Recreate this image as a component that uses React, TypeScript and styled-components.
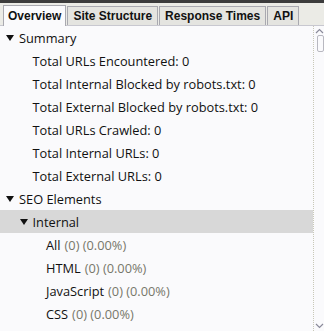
import styled, { createGlobalStyle } from "styled-components";

const GlobalStyle = createGlobalStyle`
  html, body { margin: 0; padding: 0; }
  body {
    width: 324px;
    height: 331px;
    overflow: hidden;
    background: #fafafc;
    font-family: "Open Sans", "Liberation Sans", sans-serif;
  }
`;

type Row = { label: string; level: number; toggle?: boolean; selected?: boolean; stats?: string };

const rows: Row[] = [
  { label: "Summary", level: 0, toggle: true },
  { label: "Total URLs Encountered: 0", level: 1 },
  { label: "Total Internal Blocked by robots.txt: 0", level: 1 },
  { label: "Total External Blocked by robots.txt: 0", level: 1 },
  { label: "Total URLs Crawled: 0", level: 1 },
  { label: "Total Internal URLs: 0", level: 1 },
  { label: "Total External URLs: 0", level: 1 },
  { label: "SEO Elements", level: 0, toggle: true },
  { label: "Internal", level: 1, toggle: true, selected: true },
  { label: "All", level: 2, stats: "(0) (0.00%)" },
  { label: "HTML", level: 2, stats: "(0) (0.00%)" },
  { label: "JavaScript", level: 2, stats: "(0) (0.00%)" },
  { label: "CSS", level: 2, stats: "(0) (0.00%)" },
];

const tabs = ["Overview", "Site Structure", "Response Times", "API"];

const App = () => (
  <Frame>
    <GlobalStyle />
    <TopStrip />
    <TabBar>
      {tabs.map((t, i) => (
        <Tab key={t} $active={i === 0}>
          {t}
        </Tab>
      ))}
    </TabBar>
    <Body>
      <Tree>
        {rows.map((r) => (
          <TreeRow key={r.label} $selected={!!r.selected}>
            <Indent $level={r.level}>
              <ArrowBox>
                {r.toggle && (
                  <svg width="8" height="6" viewBox="0 0 8 6">
                    <path d="M0 0 H8 L4 6 Z" fill="#111" />
                  </svg>
                )}
              </ArrowBox>
              <Label>{r.label}</Label>
              {r.stats && <Stats>{r.stats}</Stats>}
            </Indent>
          </TreeRow>
        ))}
      </Tree>
      <ScrollBar>
        <Chevron viewBox="0 0 9 6">
          <path d="M1 5 L4.5 1.5 L8 5" fill="none" stroke="#8a8a9a" strokeWidth="1.2" />
        </Chevron>
        <Thumb />
        <Track />
        <Chevron viewBox="0 0 9 6">
          <path d="M1 1 L4.5 4.5 L8 1" fill="none" stroke="#8a8a9a" strokeWidth="1.2" />
        </Chevron>
      </ScrollBar>
    </Body>
  </Frame>
);

export default App;

const Frame = styled.div`
  width: 324px;
  height: 331px;
  display: flex;
  flex-direction: column;
  overflow: hidden;
`;

const TopStrip = styled.div`
  height: 3px;
  background: #3c3c3c;
`;

const TabBar = styled.div`
  height: 23px;
  display: flex;
  align-items: flex-end;
  gap: 1px;
  padding-left: 3px;
  background: #ebebe6;
  border-bottom: 1px solid #c8c8d0;
  box-sizing: border-box;
`;

const Tab = styled.div<{ $active: boolean }>`
  height: ${(p) => (p.$active ? "21px" : "19px")};
  padding: 0 ${(p) => (p.$active ? "4px" : "5px")};
  display: flex;
  align-items: center;
  white-space: nowrap;
  box-sizing: border-box;
  border: 1px solid #a9a9b0;
  border-bottom: none;
  background: ${(p) => (p.$active ? "#fafafc" : "#e4e4e0")};
  font-family: "Liberation Sans", Arial, sans-serif;
  font-weight: bold;
  font-size: 12px;
  color: #111;
  margin-bottom: ${(p) => (p.$active ? "-1px" : "0")};
`;

const Body = styled.div`
  flex: 1;
  display: flex;
  min-height: 0;
`;

const Tree = styled.div`
  flex: 1;
  display: flex;
  flex-direction: column;
`;

const TreeRow = styled.div<{ $selected: boolean }>`
  height: 23px;
  flex-shrink: 0;
  display: flex;
  align-items: center;
  background: ${(p) => (p.$selected ? "#d8d8d8" : "transparent")};
`;

const Indent = styled.div<{ $level: number }>`
  display: flex;
  align-items: center;
  padding-left: ${(p) => 6 + p.$level * 13.5}px;
  font-size: 12.8px;
  color: #111;
`;

const ArrowBox = styled.span`
  width: 13px;
  display: flex;
  align-items: center;
`;

const Label = styled.span`
  white-space: nowrap;
`;

const Stats = styled.span`
  margin-left: 4px;
  color: #77776a;
  white-space: nowrap;
`;

const ScrollBar = styled.div`
  width: 10px;
  display: flex;
  flex-direction: column;
  align-items: center;
  border-left: 1px dotted #c8c8b8;
  padding: 2px 0 2px 0;
`;

const Chevron = styled.svg`
  width: 9px;
  height: 6px;
  flex-shrink: 0;
`;

const Thumb = styled.div`
  width: 7px;
  height: 17px;
  margin: 1px 0 0 2px;
  border: 1px solid #b8b8c0;
  border-radius: 2px;
  box-sizing: border-box;
`;

const Track = styled.div`
  flex: 1;
`;
